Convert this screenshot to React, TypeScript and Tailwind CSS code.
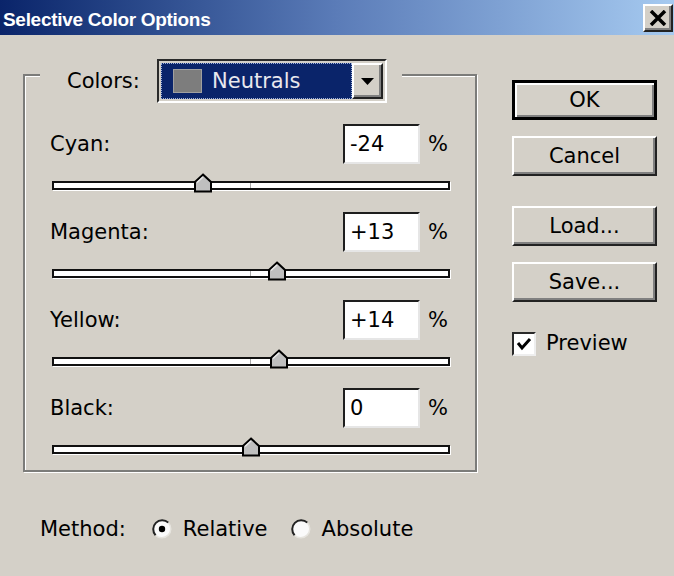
import React from "react";

const sliders = [
  { label: "Cyan:", text: "-24", value: -24 },
  { label: "Magenta:", text: "+13", value: 13 },
  { label: "Yellow:", text: "+14", value: 14 },
  { label: "Black:", text: "0", value: 0 },
];

const raised =
  "bg-[#d4d0c8] border-2 border-t-white border-l-white border-r-[#222] border-b-[#222] shadow-[inset_-2px_-2px_0_#808080]";

function Thumb({ value }: { value: number }) {
  return (
    <svg
      className="absolute top-0"
      style={{ left: 190 + value * 2 }}
      width="18"
      height="20"
      viewBox="0 0 18 20"
    >
      <polygon
        points="9,1.5 17,9 17,18.5 1,18.5 1,9"
        fill="#bfbfbf"
        stroke="#000"
        strokeWidth="2"
        strokeLinejoin="miter"
      />
      <polyline points="3,9.5 9,4 " fill="none" stroke="#e8e8e8" strokeWidth="1.5" />
    </svg>
  );
}

function SliderBlock({ label, text, value }: { label: string; text: string; value: number }) {
  return (
    <div className="flex flex-col">
      <div className="flex items-center h-[40px]">
        <span className="flex-1">{label}</span>
        <div className="w-[77px] h-[40px] bg-white border-2 border-[#1e1e1e] border-r-[#e6e6e6] border-b-[#e6e6e6] flex items-center pl-[5px]">
          {text}
        </div>
        <span className="ml-[8px] w-[22px]">%</span>
      </div>
      <div className="relative mt-[9px] ml-[2px] w-[398px] h-[20px]">
        <div className="relative mt-[8px] h-[9px] bg-white border-2 border-[#111] shadow-[1px_1px_0_#fff]">
          <div className="absolute left-[196px] top-0 bottom-0 w-px bg-[#a8a8a8]" />
        </div>
        <Thumb value={value} />
      </div>
    </div>
  );
}

function Radio({ checked }: { checked?: boolean }) {
  return (
    <svg width="22" height="22" viewBox="0 0 22 22">
      <circle cx="11" cy="11" r="9" fill="#fafafa" />
      <path d="M17.36 4.64 A9 9 0 0 0 4.64 17.36" fill="none" stroke="#222" strokeWidth="2" />
      <path d="M4.64 17.36 A9 9 0 0 0 17.36 4.64" fill="none" stroke="#e6e4de" strokeWidth="1.5" />
      {checked && <circle cx="11" cy="11" r="3.2" fill="#000" />}
    </svg>
  );
}

export default function App() {
  return (
    <div className="w-[674px] h-[576px] bg-[#d4d0c8] flex flex-col overflow-hidden text-[21px] leading-none text-black font-[family-name:DejaVu_Sans,sans-serif]">
      {/* title bar */}
      <div className="h-[35px] shrink-0 flex items-center justify-between pl-[3px] pr-[1px] bg-gradient-to-r from-[#0a246a] via-[#5b7cb8] to-[#a6caf0]">
        <span className="pt-[4px] text-white font-bold text-[19px] tracking-[-0.3px] font-[family-name:Liberation_Sans,sans-serif]">
          Selective Color Options
        </span>
        <div className={`w-[30px] h-[28px] flex items-center justify-center ${raised}`}>
          <svg width="18" height="16" viewBox="0 0 18 16">
            <path d="M2 1 L16 15 M16 1 L2 15" stroke="#000" strokeWidth="3.5" />
          </svg>
        </div>
      </div>

      <div className="flex flex-1">
        {/* left column */}
        <div className="flex flex-col pl-[23px] pt-[39px]">
          <div className="w-[454px] h-[398px] border-2 border-[#7c7c7a] shadow-[1px_1px_0_#fff]">
            <div className="h-full flex flex-col border-t border-l border-white">
              <div className="-mt-[18px] ml-[14px] w-[362px] h-[44px] bg-[#d4d0c8] flex items-center pl-[27px]">
                <span className="w-[90px]">Colors:</span>
                <div className="w-[230px] h-[44px] border-2 border-[#2a2a2a] border-r-white border-b-white p-[2px] flex">
                  <div className="flex-1 bg-[#0a246a] border border-dotted border-[#9fb2dc] flex items-center pl-[11px]">
                    <div className="w-[29px] h-[24px] bg-[#7d7d7d] border border-[#a0a0a0]" />
                    <span className="ml-[10px] text-[#e8e8ee]">Neutrals</span>
                  </div>
                  <div className={`w-[31px] flex items-center justify-center ${raised}`}>
                    <svg width="13" height="7" viewBox="0 0 13 7">
                      <polygon points="0,0 13,0 6.5,7" fill="#000" />
                    </svg>
                  </div>
                </div>
              </div>

              <div className="flex flex-col gap-[19px] mt-[21px] ml-[24px] w-[400px]">
                {sliders.map((s) => (
                  <SliderBlock key={s.label} {...s} />
                ))}
              </div>
            </div>
          </div>

          <div className="flex items-center h-[30px] mt-[42px] ml-[17px]">
            <span>Method:</span>
            <span className="ml-[25px] flex">
              <Radio checked />
            </span>
            <span className="ml-[10px]">Relative</span>
            <span className="ml-[22px] flex">
              <Radio />
            </span>
            <span className="ml-[10px]">Absolute</span>
          </div>
        </div>

        {/* right column */}
        <div className="flex flex-col ml-[35px] pt-[45px] w-[145px]">
          <button className="h-[40px] border-[3px] border-black bg-[#d4d0c8] shadow-[inset_2px_2px_0_#fff,inset_-2px_-2px_0_#808080] flex items-center justify-center">
            OK
          </button>
          <button className={`mt-[16px] h-[40px] flex items-center justify-center ${raised}`}>Cancel</button>
          <button className={`mt-[30px] h-[40px] flex items-center justify-center ${raised}`}>Load...</button>
          <button className={`mt-[16px] h-[40px] flex items-center justify-center ${raised}`}>Save...</button>
          <div className="mt-[29px] flex items-center h-[25px]">
            <div className="w-[24px] h-[24px] bg-white border-2 border-[#2a2a2a] border-r-[#eee] border-b-[#eee] flex items-center justify-center">
              <svg width="16" height="14" viewBox="0 0 16 14">
                <polyline points="2,6 6,11 14,2" fill="none" stroke="#000" strokeWidth="3" />
              </svg>
            </div>
            <span className="ml-[10px]">Preview</span>
          </div>
        </div>
      </div>
    </div>
  );
}
